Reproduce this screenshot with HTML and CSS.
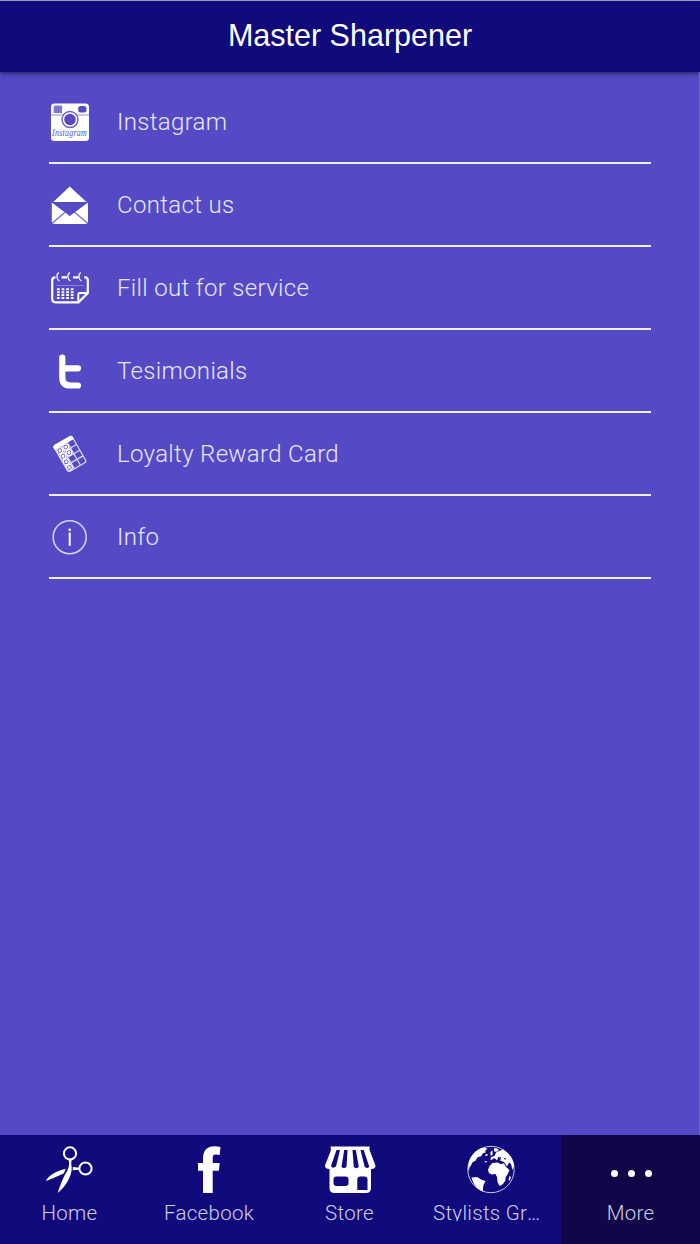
FILE: index.html
```html
<!DOCTYPE html>
<html lang="en">
<head>
    <meta charset="UTF-8">
    <meta name="viewport" content="width=device-width, initial-scale=1.0">
    <title>Master Sharpener</title>
    <link rel="stylesheet" href="styles.css">
</head>
<body>
    <header class="header">
        <h1>Master Sharpener</h1>
    </header>

    <main class="menu">
        <a class="menu-item" href="#">
            <svg class="menu-icon" viewBox="0 0 40 40">
                <rect x="1" y="1.6" width="38" height="37.4" rx="3.5" fill="#fff"/>
                <path d="M1 13h38" stroke="#8f89dc" stroke-width="1.2"/>
                <path d="M3.500 11V5.500q0-2 2-2H12V11z" fill="#8c85dc"/>
                <path d="M6 4v7M8.500 4v7M11 4v7" stroke="#625acb" stroke-width=".8"/>
                <rect x="28.200" y="4" width="8.300" height="6.500" rx="2.500" fill="#564bc5"/>
                <circle cx="20" cy="17.500" r="9.300" fill="#fff"/>
                <circle cx="20" cy="17.500" r="8" fill="#fff" stroke="#6a61ce" stroke-width="1.400"/>
                <circle cx="20" cy="17.500" r="5.800" fill="#564bc5"/>
                <text class="camera-text" x="2" y="33.500" textLength="35" lengthAdjust="spacingAndGlyphs">Instagram</text>
            </svg>
            <span>Instagram</span>
        </a>
        <a class="menu-item" href="#">
            <svg class="menu-icon" viewBox="0 0 40 40">
                <path d="M3.300 17 19.700 1.500 36.500 17z" fill="#fff"/>
                <path d="M1.800 17.500 19.800 31 38 17.500V36q0 3-3 3H4.800q-3 0-3-3z" fill="#fff"/>
                <path d="M6 17.500h28L19.800 30.500z" fill="#564bc5"/>
                <path d="M2.500 38 15.300 27M37.300 38 24.300 27" stroke="#7169d1" stroke-width="1.200"/>
            </svg>
            <span>Contact us</span>
        </a>
        <a class="menu-item" href="#">
            <svg class="menu-icon" viewBox="0 0 40 40" fill="none" stroke="#fff">
                <path d="M5.500 9.300H5Q2.200 9.300 2.200 12.500V31q0 3.300 3.300 3.300H28.500L37.800 25V12q0-2.700-2.800-2.700h-.8M11.500 9.300H17M23 9.300h5.500" stroke-width="2.200"/>
                <path d="M28.300 34V26.500q0-1.500 1.500-1.500H37.500" stroke-width="1.900"/>
                <path d="M8.800 4.500Q6.500 6 7 9.500q.3 2.500 2.500 3.500M19.800 4.500Q17.500 6 18 9.500q.3 2.500 2.500 3.500M30.800 4.500Q28.500 6 29 9.500q.3 2.500 2.500 3.500" stroke-width="1.200"/>
                <path d="M6.500 17.500h27.500" stroke="#9691e0" stroke-width=".8"/>
                <path d="M7 21.300h17M7 24.200h17M7 27.100h17M7 30h17" stroke-width="2" stroke-dasharray="2.700 1.900"/>
            </svg>
            <span>Fill out for service</span>
        </a>
        <a class="menu-item" href="#">
            <svg class="menu-icon" viewBox="0 0 40 40">
                <path d="M12.300 6.500V26.500q0 8 8 8H28M13 17.300H28" fill="none" stroke="#fff" stroke-width="6.200" stroke-linecap="round"/>
            </svg>
            <span>Tesimonials</span>
        </a>
        <a class="menu-item" href="#">
            <svg class="menu-icon" viewBox="0 0 40 40">
                <g transform="translate(2.500 12) rotate(-30)">
                    <rect x=".6" y=".6" width="21" height="30" rx="2" fill="none" stroke="#dedcf6" stroke-width="1.200"/>
                    <path d="M0 4.500V2q0-2 2-2h18q2 0 2 2v2.500z" fill="#fff"/>
                    <path d="M7.600 4v26M14.600 4v26M.5 10.800h21M.5 17.300h21M.5 23.800h21" stroke="#dedcf6" stroke-width="1.200"/>
                    <g fill="none" stroke="#fff" stroke-width="1.100">
                        <circle cx="4" cy="7.500" r="2.800"/>
                        <circle cx="11" cy="7.500" r="2.800"/>
                        <circle cx="4" cy="14" r="2.800"/>
                        <circle cx="11" cy="14" r="2.800"/>
                        <circle cx="4" cy="20.500" r="2.800"/>
                        <circle cx="4" cy="27" r="2.800"/>
                    </g>
                    <g fill="#fff">
                        <circle cx="4" cy="7.500" r="1.500"/>
                        <circle cx="11" cy="7.500" r="1.500"/>
                        <circle cx="4" cy="14" r="1.500"/>
                        <circle cx="11" cy="14" r="1.500"/>
                        <circle cx="4" cy="20.500" r="1.500"/>
                        <circle cx="4" cy="27" r="1.500"/>
                    </g>
                </g>
            </svg>
            <span>Loyalty Reward Card</span>
        </a>
        <a class="menu-item" href="#">
            <svg class="menu-icon" viewBox="0 0 40 40">
                <circle cx="19.700" cy="20.200" r="16.500" fill="none" stroke="#d5d2f3" stroke-width="1.500"/>
                <path d="M19.700 15.500v13.300" stroke="#fff" stroke-width="2"/>
                <circle cx="19.700" cy="12.700" r="1.300" fill="#fff"/>
            </svg>
            <span>Info</span>
        </a>
    </main>

    <nav class="tabs">
        <a class="tab" href="#">
            <svg class="tab-icon" viewBox="0 0 50 50">
                <g fill="none" stroke="#fff" stroke-width="2">
                    <circle cx="25" cy="8.400" r="6.100"/>
                    <circle cx="40.500" cy="23.500" r="6.100"/>
                </g>
                <path d="M23.500 14.500h3.200q-1 3 0 8.500C26.800 32 19.500 43 12.600 48 15.300 40 18.300 32 22.100 26 24.300 22 24.600 18 23.500 14.500z" fill="#fff"/>
                <path d="M.8 36C4.300 30 11.300 26 20.600 23.800l-1.600 4.500C13.300 31 7.300 34 .8 36zM27.800 22l7 .7v2l-7 .6z" fill="#fff"/>
            </svg>
            <span class="tab-label">Home</span>
        </a>
        <a class="tab" href="#">
            <svg class="tab-icon" viewBox="0 0 50 50">
                <path d="M19 48V25.800h-5V17.900h5v-4C19 5 23.500 1.300 30 1.300q3.500 0 6.500.6L35.700 10q-2-.6-4-.6c-2.500 0-3 1.200-3 3.600v4.900h7l-.8 7.900h-6.200V48z" fill="#fff"/>
            </svg>
            <span class="tab-label">Facebook</span>
        </a>
        <a class="tab" href="#">
            <svg class="tab-icon" viewBox="0 0 50 50">
                <path d="M5.500 1.500h39V5L50.500 20.500q0 3.500-4.500 3.500V43q0 5-5 5H9.500q-5 0-5-5V24Q0 24 0 20.500L6 5z" fill="#fff"/>
                <g fill="#100a7d">
                    <path d="M11.500 5h3.500L11 21.500q-3.500 2.500-5-.5zM19.200 5h3.300l-1 17q-3 2.400-5-.3zM27.500 5h3.300l3 16.700q-2 2.700-5 .3zM35.500 5h3.200l5.500 16.500q-1 2.700-4.500.5z"/>
                    <rect x="8.500" y="31.500" width="15" height="9.500" rx="3"/>
                    <path d="M32.300 34.500q0-3 3-3h4.200q3 0 3 3V45H32.300z"/>
                </g>
            </svg>
            <span class="tab-label">Store</span>
        </a>
        <a class="tab" href="#">
            <svg class="tab-icon" viewBox="0 0 50 50">
                <circle cx="25" cy="24.500" r="23.200" fill="none" stroke="#c7c4e6" stroke-width="1"/>
                <g fill="#fff">
                    <path d="M2.500 26C1 17 6 6 16 3l3-.3 2.500 1-2.500 2 1 1.500-3 1-2 3-3.500 1-2 3.500-3 1.500-2 4-1 1-.5 3z"/>
                    <path d="M5.500 32.500 11 32l4 2.500 4.500 1.500-2 4-.5 3v3.500C11 44 7 39 5.500 32.500z"/>
                    <path d="M22 25l1.500-4 3-3 5.500-.5 2 1.500 4-.5 2 3.500 3.500 3-2 4.500-2 3v3l-3 4-3 1.500-2-4-.5-5-1.500-3-4 .5-2.500-1.500z"/>
                    <path d="M24.500 15l.5-3 3.500-1 1.500-3.500L33 6l4-1.500C43 8 47.500 14 48 21l-1.500 4-1.500-6-2-1.500-2 4-3-4.500-4-1.500 1-2-3-.5-1 2.500-2-2z"/>
                    <path d="M28 3l3 .5 2 1.500-3 2-2-1zM24.500 7l2-1.500V10l-2 .5zM20 9l2 .5-1 1.500-2-.5zM19 16l2 .5-.5 1-2-.5zM43.500 31l1.500 1-1.500 4-1-1z"/>
                </g>
                <path d="M32 12.500l3 .5M31 15.500l3 1.500M38 13.500l2 .5M27.500 13.500l2 2" stroke="#100a7d" stroke-width="1.200"/>
            </svg>
            <span class="tab-label tab-label-long">Stylists Group</span>
        </a>
        <a class="tab active" href="#">
            <svg class="tab-icon" viewBox="0 0 50 50" fill="#fff">
                <circle cx="8.500" cy="28.500" r="3.500"/>
                <circle cx="25.500" cy="28.500" r="3.500"/>
                <circle cx="42.500" cy="28.500" r="3.500"/>
            </svg>
            <span class="tab-label">More</span>
        </a>
    </nav>
</body>
</html>
```
FILE: styles.css
```css
* {
    box-sizing: border-box;
}

body {
    margin: 0;
    height: 100vh;
    display: flex;
    flex-direction: column;
    background-color: #554ac5;
    font-family: Roboto, "Liberation Sans", sans-serif;
    font-weight: 300;
    overflow: hidden;
}

a {
    text-decoration: none;
}

.header {
    height: 72px;
    border-top: 1px solid #9c9abf;
    background-color: #100a7d;
    box-shadow: 0 1px 5px rgba(0, 0, 0, 0.65);
    text-align: center;
}

.header h1 {
    margin: 0;
    font-family: "Liberation Sans", sans-serif;
    font-size: 30.5px;
    font-weight: normal;
    line-height: 68px;
    color: #fff;
}

.menu {
    flex: 1;
    padding: 9px 49px 0;
    border-right: 1px solid #7068cc;
}

.menu-item {
    display: flex;
    align-items: center;
    gap: 27px;
    height: 83px;
    padding: 1px 0 0 1px;
    margin-right: -1px;
    border-bottom: 2px solid #f0effb;
    font-size: 24px;
    letter-spacing: 0.33px;
    color: #e8e6f9;
}

.menu-icon {
    width: 40px;
    height: 40px;
    overflow: visible;
}

.camera-text {
    font-family: "Liberation Serif", serif;
    font-size: 10px;
    font-style: italic;
    fill: #564bc5;
}

.tabs {
    display: grid;
    grid-template-columns: 139px 140px 141px 141px 139px;
    height: 109px;
    background-color: #100a7d;
}

.tab {
    display: flex;
    flex-direction: column;
    align-items: center;
    padding-top: 10px;
}

.tab.active {
    background-color: #110748;
}

.tab-icon {
    width: 50px;
    height: 50px;
    overflow: visible;
}

.tab-label {
    margin-top: 4px;
    text-align: center;
    white-space: nowrap;
    font-size: 20.5px;
    line-height: 28px;
    letter-spacing: 0.3px;
    color: #d0cee8;
}

.tab-label-long {
    width: 112px;
    height: 22px;
    margin-right: 3px;
    overflow: hidden;
    text-overflow: ellipsis;
}
```
